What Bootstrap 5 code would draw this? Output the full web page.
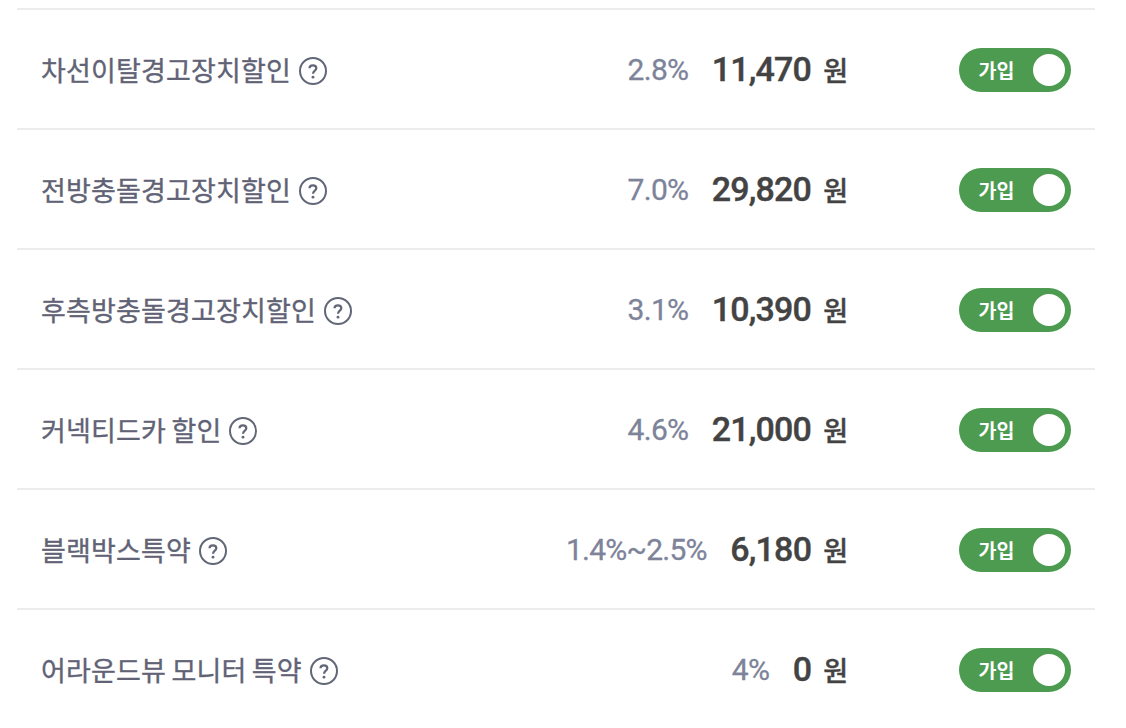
<!DOCTYPE html>
<html lang="ko">
<head>
    <meta charset="UTF-8">
    <meta name="viewport" content="width=device-width, initial-scale=1.0">
    <title>특약 할인</title>
    <link href="https://cdn.jsdelivr.net/npm/bootstrap@5.3.0/dist/css/bootstrap.min.css" rel="stylesheet">
    <style>
        body {
            font-family: Roboto, "Noto Sans CJK KR", sans-serif;
            overflow: hidden;
        }
        .rider-list {
            width: 1078px;
            margin: 8px 0 0 17px;
        }
        .rider-item {
            height: 120px;
            padding: 2px 24px 0;
            border-top: 2px solid #ececef;
        }
        .rider-name {
            padding-top: 5px;
            font-size: 27px;
            letter-spacing: 0.17px;
            word-spacing: -1.5px;
            color: #5f6375;
            -webkit-text-stroke: 0.35px #5f6375;
        }
        .help-icon {
            width: 28px;
            height: 28px;
            margin: 2px 0 0 8px;
            color: #626777;
        }
        .rider-rate {
            font-size: 30px;
            letter-spacing: -0.75px;
            color: #7d8399;
            margin-right: 23.5px;
            -webkit-text-stroke: 0.3px #7d8399;
        }
        .rider-price {
            padding-bottom: 2px;
            font-size: 34px;
            font-weight: 500;
            letter-spacing: -0.8px;
            color: #434343;
            -webkit-text-stroke: 0.4px #434343;
        }
        .rider-won {
            padding-top: 5px;
            font-size: 27px;
            font-weight: 500;
            color: #434343;
            margin: 0 111px 0 12px;
            -webkit-text-stroke: 0.4px #434343;
        }
        .join-switch {
            width: 112px;
            height: 44px;
            padding: 0 6px 0 19.5px;
            background: #4d9b50;
            color: #fff;
            font-size: 19.5px;
            font-weight: 700;
        }
        .join-label {
            padding-top: 4px;
        }
        .join-knob {
            width: 32px;
            height: 32px;
        }
    </style>
</head>
<body class="bg-white">
    <div class="rider-list" id="riderList"></div>

    <script src="https://cdn.jsdelivr.net/npm/bootstrap@5.3.0/dist/js/bootstrap.bundle.min.js"></script>
    <script>
        const riders = [
            ['차선이탈경고장치할인', '2.8%', '11,470'],
            ['전방충돌경고장치할인', '7.0%', '29,820'],
            ['후측방충돌경고장치할인', '3.1%', '10,390'],
            ['커넥티드카 할인', '4.6%', '21,000'],
            ['블랙박스특약', '1.4%~2.5%', '6,180'],
            ['어라운드뷰 모니터 특약', '4%', '0']
        ];

        document.getElementById('riderList').innerHTML = riders.map(function([name, rate, price]) {
            return `
                <div class="rider-item d-flex align-items-center text-nowrap lh-1">
                    <span class="rider-name">${name}</span>
                    <svg class="help-icon me-auto" viewBox="0 0 28 28" fill="none" stroke="currentColor" stroke-width="2">
                        <circle cx="14" cy="14" r="13"/>
                        <path d="M10.5 11.3c0-1.9 1.4-3 3.4-3s3.4 1.1 3.4 2.9c0 2.5-3.3 2.4-3.3 5.6" stroke-width="2.2"/>
                        <circle cx="14" cy="20.2" r="1.4" fill="currentColor" stroke="none"/>
                    </svg>
                    <span class="rider-rate">${rate}</span>
                    <span class="rider-price">${price}</span>
                    <span class="rider-won">원</span>
                    <button type="button" class="join-switch btn rounded-pill border-0 d-flex align-items-center justify-content-between lh-1">
                        <span class="join-label">가입</span>
                        <span class="join-knob rounded-circle bg-white"></span>
                    </button>
                </div>`;
        }).join('');
    </script>
</body>
</html>
